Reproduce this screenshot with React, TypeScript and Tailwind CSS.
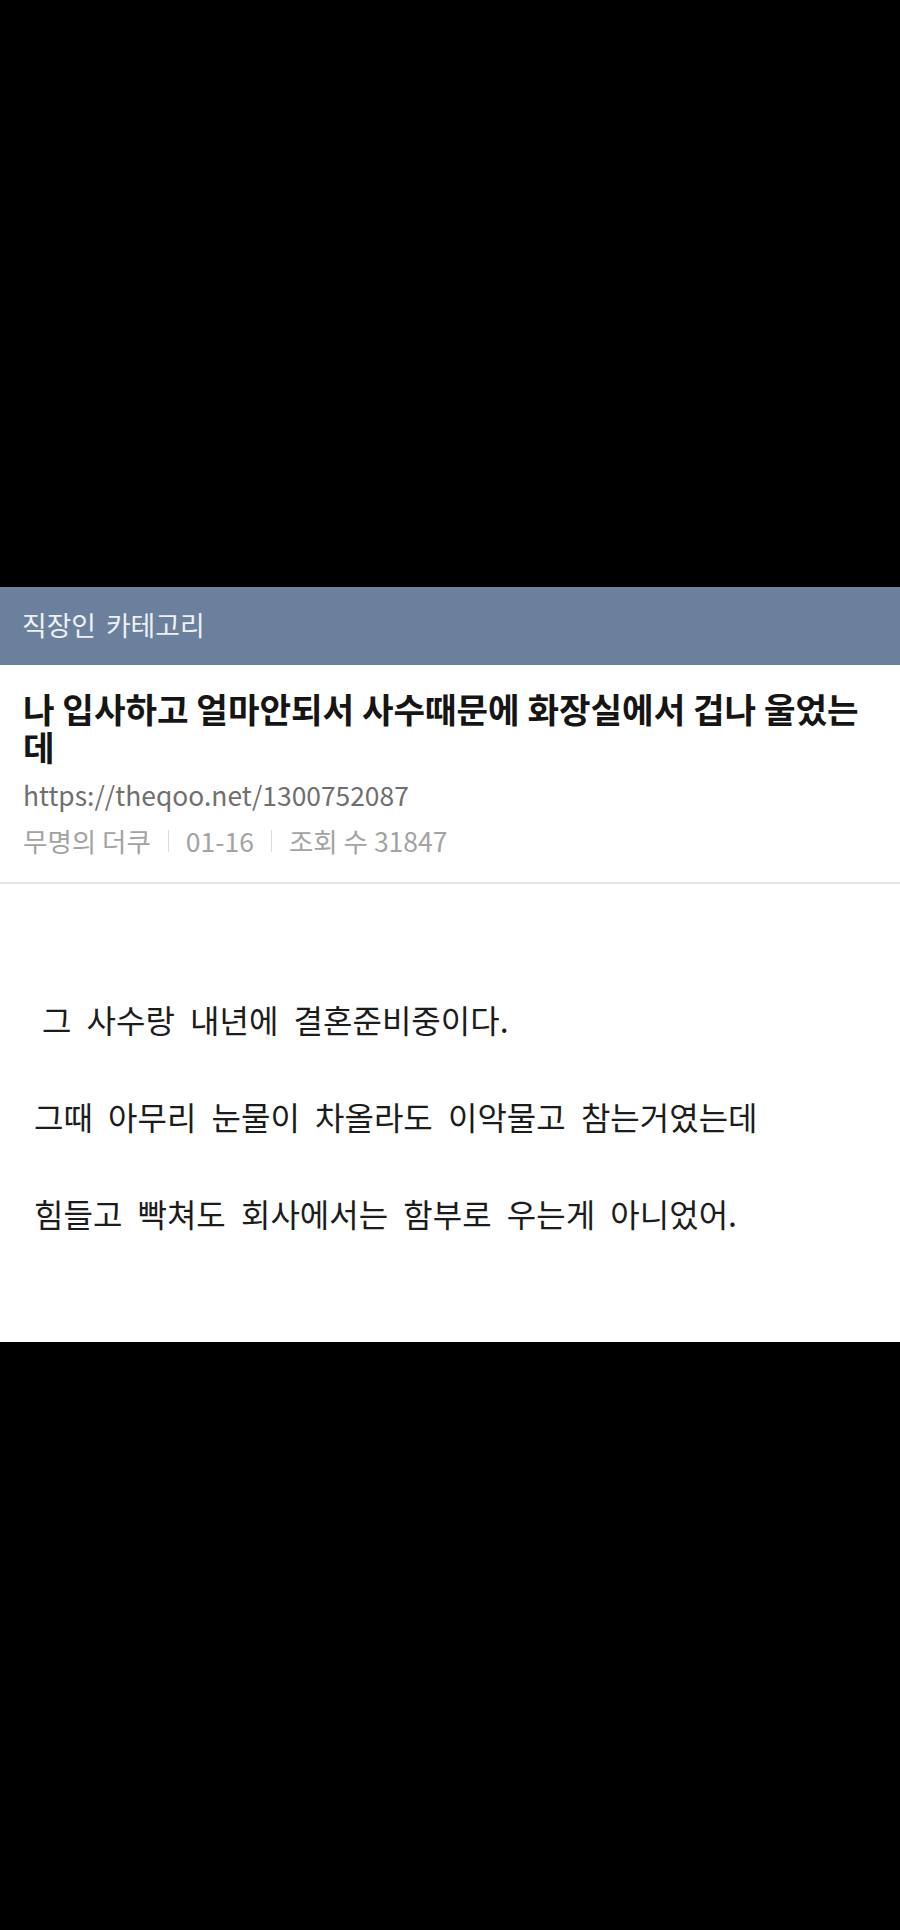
const kr = { fontFamily: '"Noto Sans CJK KR", "Noto Sans", sans-serif' }

function Sep() {
  return <span className="mx-[17px] inline-block h-[22px] w-px bg-[#dcdcdc]" />
}

export default function App() {
  return (
    <div className="flex h-[1930px] w-[900px] flex-col bg-black" style={kr}>
      <div className="h-[587px]" />

      <div className="flex h-[78px] items-center bg-[#6b809d] pl-[22px] pb-[2px]">
        <span className="text-[26.8px] leading-none text-[#eef1f5] [word-spacing:4px]">직장인 카테고리</span>
      </div>

      <div className="flex h-[677px] flex-col bg-white">
        <div className="border-b-2 border-[#e6e6e6] pt-[24px] pb-[24px] pl-[23px] pr-[40px]">
          <h1 className="text-[34.3px] font-bold leading-[38px] text-[#151515]">
            나 입사하고 얼마안되서 사수때문에 화장실에서 겁나 울었는데
          </h1>
          <div className="mt-[13px] text-[26.4px] leading-[34px] text-[#6f6f6f]">
            https://theqoo.net/1300752087
          </div>
          <div className="mt-[12px] flex items-center text-[26.5px] leading-[34px] text-[#a3a3a3]">
            <span>무명의 더쿠</span>
            <Sep />
            <span>01-16</span>
            <Sep />
            <span>조회 수 31847</span>
          </div>
        </div>

        <div className="flex flex-col gap-[57px] pt-[115px] pl-[34px] text-[32px] leading-[40px] text-[#1c1c1c] [word-spacing:8px]">
          <p className="pl-[8px]">그 사수랑 내년에 결혼준비중이다.</p>
          <p>그때 아무리 눈물이 차올라도 이악물고 참는거였는데</p>
          <p>힘들고 빡쳐도 회사에서는 함부로 우는게 아니었어.</p>
        </div>
      </div>

      <div className="flex-1" />
    </div>
  )
}
